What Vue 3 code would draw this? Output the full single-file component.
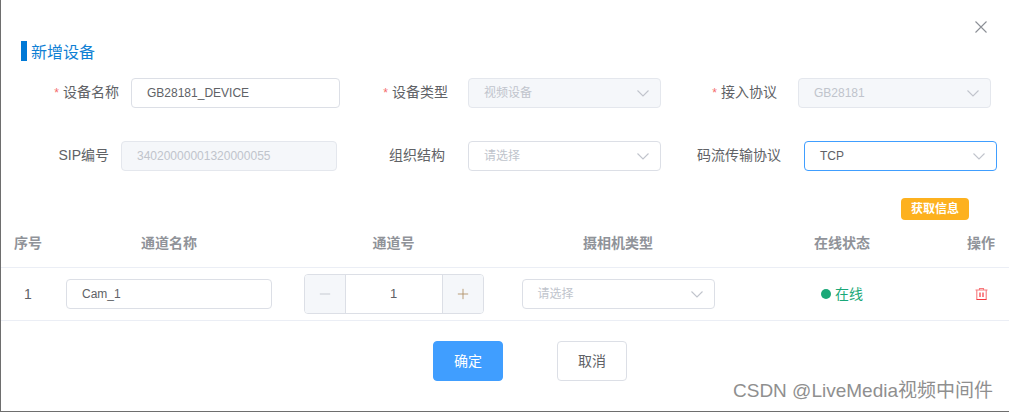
<script setup>
const columns = ['序号', '通道名称', '通道号', '摄相机类型', '在线状态', '操作']
</script>

<template>
  <div class="dialog">
    <div class="close-row">
      <svg class="close" viewBox="0 0 12 12"><path d="M.5.5l11 11M11.5.5l-11 11" /></svg>
    </div>
    <div class="title">新增设备</div>

    <div class="form-row row-one">
      <label class="lbl l1"><i>*</i>设备名称</label>
      <div class="ctl c1"><span class="val">GB28181_DEVICE</span></div>
      <label class="lbl l2"><i>*</i>设备类型</label>
      <div class="ctl c2 off">
        <span class="cjk">视频设备</span>
        <svg class="arrow" viewBox="0 0 12 7"><path d="M.5.5L6 6 11.5.5" /></svg>
      </div>
      <label class="lbl l3"><i>*</i>接入协议</label>
      <div class="ctl c2 off">
        <span>GB28181</span>
        <svg class="arrow" viewBox="0 0 12 7"><path d="M.5.5L6 6 11.5.5" /></svg>
      </div>
    </div>

    <div class="form-row row-two">
      <label class="lbl l4">SIP编号</label>
      <div class="ctl c4 off"><span>34020000001320000055</span></div>
      <label class="lbl l5">组织结构</label>
      <div class="ctl c2 hint">
        <span class="cjk">请选择</span>
        <svg class="arrow" viewBox="0 0 12 7"><path d="M.5.5L6 6 11.5.5" /></svg>
      </div>
      <label class="lbl l6">码流传输协议</label>
      <div class="ctl c2 focus">
        <span class="val">TCP</span>
        <svg class="arrow" viewBox="0 0 12 7"><path d="M.5.5L6 6 11.5.5" /></svg>
      </div>
    </div>

    <div class="info-row"><button class="info">获取信息</button></div>

    <div class="grid head">
      <div v-for="c in columns" :key="c">{{ c }}</div>
    </div>
    <div class="grid body">
      <div class="index">1</div>
      <div><div class="ctl cam"><span class="val">Cam_1</span></div></div>
      <div>
        <div class="stepper">
          <span class="step minus"><svg viewBox="0 0 14 14"><path d="M1 7h12" /></svg></span>
          <span class="num">1</span>
          <span class="step plus"><svg viewBox="0 0 14 14"><path d="M1 7h12M7 1v12" /></svg></span>
        </div>
      </div>
      <div>
        <div class="ctl c2 hint">
          <span class="cjk">请选择</span>
          <svg class="arrow" viewBox="0 0 12 7"><path d="M.5.5L6 6 11.5.5" /></svg>
        </div>
      </div>
      <div class="status"><b></b><span>在线</span></div>
      <div>
        <svg class="trash" viewBox="0 0 13 12">
          <path class="thin" d="M4.5 1.5V.5h4v1M.5 2h12M1.8 2v9.5M11.2 2v9.5" />
          <path d="M1.5 11.5h10M5 4.5v4.5M8 4.5v4.5" />
        </svg>
      </div>
    </div>

    <div class="footer">
      <button class="btn primary">确定</button>
      <button class="btn">取消</button>
    </div>

    <div class="mark">CSDN @LiveMedia视频中间件</div>
  </div>
</template>

<style>
html, body { margin: 0; background: #fff; overflow: hidden; }
</style>

<style scoped>
.dialog {
  position: relative;
  width: 1009px;
  height: 412px;
  box-sizing: border-box;
  overflow: hidden;
  background: #fff;
  font-family: "Liberation Sans", "Noto Sans CJK SC", sans-serif;
  color: #606266;
}
.dialog::after {
  content: "";
  position: absolute;
  inset: 0;
  border-left: 1px solid #6e6e6e;
  border-bottom: 1px solid #6e6e6e;
  pointer-events: none;
}
.close-row { display: flex; justify-content: flex-end; padding: 21px 22px 0 0; height: 12px; }
.close { width: 12px; height: 12px; fill: none; stroke: #8c8f96; stroke-width: 1.1; }
.title {
  margin: 8px 0 0 21px;
  height: 20px;
  line-height: 24px;
  padding-left: 4px;
  border-left: 6px solid #0079d6;
  color: #0f80d4;
  font-size: 16px;
}
.form-row { display: flex; align-items: center; height: 30px; }
.row-one { margin-top: 17px; }
.row-two { margin-top: 33px; }
.lbl { font-size: 14px; text-align: right; white-space: nowrap; color: #606266; padding-bottom: 4px; }
.lbl i { color: #f56c6c; font-style: normal; font-size: 12px; margin-right: 4px; }
.l1 { width: 119px; margin-right: 12px; }
.l2 { width: 108px; margin-right: 20px; }
.l3 { width: 116px; margin-right: 21px; }
.l4 { width: 109px; margin-right: 12px; }
.l5 { width: 108px; margin-right: 23px; }
.l6 { width: 120px; margin-right: 23px; }
.ctl {
  display: flex;
  align-items: center;
  justify-content: space-between;
  box-sizing: border-box;
  height: 30px;
  padding: 0 15px;
  border: 1px solid #dcdfe6;
  border-radius: 4px;
  background: #fff;
  font-size: 12px;
  color: #c0c4cc;
  white-space: nowrap;
}
.cjk { padding-bottom: 3px; }
.val { color: #606266; }
.c1 { width: 209px; }
.c2 { width: 193px; }
.c4 { width: 216px; }
.cam { width: 206px; margin: 0 auto; }
.off { background: #f5f7fa; border-color: #e4e7ed; }
.focus { border-color: #409eff; }
.arrow { width: 12px; height: 7px; fill: none; stroke: #c0c4cc; stroke-width: 1.1; margin: 1px -4px 0 0; }
.info-row { display: flex; justify-content: flex-end; padding: 27px 40px 0 0; }
.info {
  width: 68px;
  height: 22px;
  padding: 0 0 3px;
  border: 0;
  border-radius: 4px;
  background: #fdb11f;
  color: #fff;
  font: bold 12px "Liberation Sans", "Noto Sans CJK SC", sans-serif;
}
.grid {
  display: grid;
  grid-template-columns: 56px 226px 223px 226px 222px 56px;
  align-items: center;
  justify-items: center;
}
.head {
  height: 47px;
  border-bottom: 1px solid #ebeef5;
  color: #909399;
  font-size: 14px;
  font-weight: bold;
}
.head > div { padding-bottom: 3px; }
.body { height: 52px; border-bottom: 1px solid #ebeef5; font-size: 14px; }
.index { font-size: 14px; padding-bottom: 1px; }
.stepper {
  display: flex;
  box-sizing: border-box;
  width: 180px;
  height: 40px;
  border: 1px solid #dcdfe6;
  border-radius: 4px;
  overflow: hidden;
}
.step {
  display: flex;
  align-items: center;
  justify-content: center;
  width: 40px;
  background: #f5f7fa;
}
.step svg { width: 12px; height: 12px; fill: none; stroke-width: 1; }
.minus { border-right: 1px solid #dcdfe6; }
.minus svg { stroke: #c0c4cc; }
.plus { border-left: 1px solid #dcdfe6; }
.plus svg { stroke: #b08f63; }
.num { flex: 1; text-align: center; line-height: 38px; font-size: 13px; }
.status { display: flex; align-items: center; color: #1aa878; font-size: 14px; }
.status b { width: 10px; height: 10px; border-radius: 50%; background: #1aa878; margin: 0 4px 1px 0; }
.status span { padding-bottom: 3px; }
.trash { display: block; width: 13px; height: 12px; fill: none; stroke: #f5383e; stroke-width: 1.2; margin-bottom: 1px; }
.trash .thin { stroke: #f77a7d; stroke-width: 1.1; }
.footer { display: flex; gap: 54px; margin-top: 20px; padding-left: 433px; }
.btn {
  width: 70px;
  height: 40px;
  padding: 0 0 2px;
  border: 1px solid #dcdfe6;
  border-radius: 4px;
  background: #fff;
  color: #606266;
  font: 14px "Liberation Sans", "Noto Sans CJK SC", sans-serif;
}
.primary { background: #409eff; border-color: #409eff; color: #fff; }
.mark {
  position: absolute;
  left: 733px;
  top: 379px;
  font-size: 19px;
  line-height: 24px;
  color: #8f8f8f;
  white-space: nowrap;
}
</style>
